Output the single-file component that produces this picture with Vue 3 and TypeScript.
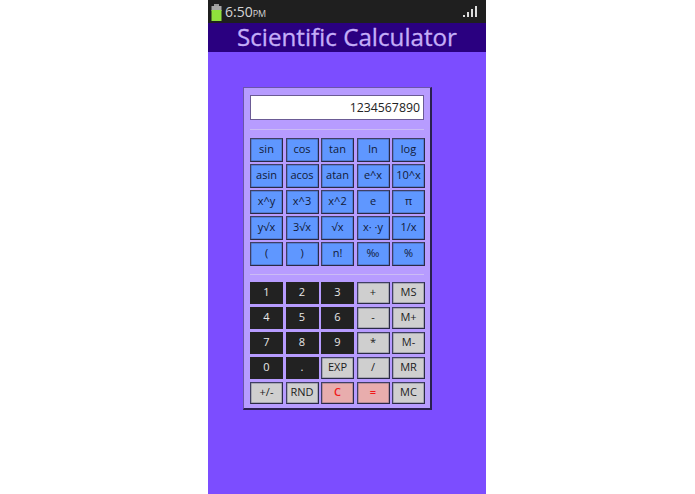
<script setup lang="ts">
interface Key { label: string; kind: string }
const sci: string[] = ['sin','cos','tan','ln','log','asin','acos','atan','e^x','10^x','x^y','x^3','x^2','e','π','y√x','3√x','√x','x· ·y','1/x','(',')','n!','‰','%']
const mk = (s: string, kind: string): Key => ({ label: s, kind })
const pad: Key[] = [
  mk('1','dark'),mk('2','dark'),mk('3','dark'),mk('+','grey'),mk('MS','grey'),
  mk('4','dark'),mk('5','dark'),mk('6','dark'),mk('-','grey'),mk('M+','grey'),
  mk('7','dark'),mk('8','dark'),mk('9','dark'),mk('*','grey'),mk('M-','grey'),
  mk('0','dark'),mk('.','dark'),mk('EXP','grey'),mk('/','grey'),mk('MR','grey'),
  mk('+/-','grey'),mk('RND','grey'),mk('C','red'),mk('=','red'),mk('MC','grey'),
]
</script>

<template>
  <div class="page">
    <div class="phone">
      <div class="status">
        <svg class="battery" width="11" height="17" viewBox="0 0 11 17">
          <rect x="3" y="0" width="5" height="2" fill="#9a9a9a" />
          <rect x="0.5" y="2" width="10" height="5" fill="#a8a8a8" />
          <rect x="0.5" y="6" width="10" height="11" fill="#8fe03c" />
        </svg>
        <span class="time">6:50<small>PM</small></span>
        <svg class="signal" width="14" height="12" viewBox="0 0 14 12">
          <rect x="0" y="9" width="2" height="2" fill="#ddd" />
          <rect x="4" y="6" width="2" height="5" fill="#ddd" />
          <rect x="8" y="3" width="2" height="8" fill="#ddd" />
          <rect x="12" y="0" width="2" height="11" fill="#ddd" />
        </svg>
      </div>
      <div class="title">Scientific Calculator</div>
      <div class="content">
        <div class="panel">
          <div class="display">1234567890</div>
          <div class="divider first"></div>
          <div class="keys sci">
            <div v-for="k in sci" :key="k" class="key blue">{{ k }}</div>
          </div>
          <div class="divider second"></div>
          <div class="keys num">
            <div v-for="k in pad" :key="k.label" class="key" :class="k.kind">{{ k.label }}</div>
          </div>
        </div>
      </div>
    </div>
  </div>
</template>

<style>
html, body { margin: 0; background: #fff; }
</style>

<style scoped>
.page {
  width: 695px;
  height: 494px;
  padding-left: 208px;
  box-sizing: border-box;
  overflow: hidden;
  font-family: "Open Sans", "Noto Sans", sans-serif;
}
.phone { width: 278px; height: 494px; display: flex; flex-direction: column; background: #7c4dff; }
.status {
  height: 23px;
  background: #1f1f1f;
  display: flex;
  align-items: center;
  padding: 0 9px 0 3px;
  color: #d4d4d4;
}
.battery { margin-top: 1px; }
.time { font-size: 14px; margin-left: 3px; flex: 1; }
.time small { font-size: 9px; }
.title {
  height: 29px;
  line-height: 28px;
  background: #2a0080;
  color: #c4aef8;
  font-size: 24.2px;
  font-weight: 500;
  text-align: center;
  -webkit-text-stroke: 0.3px #c4aef8;
}
.content { flex: 1; padding: 35px 0 0 35px; }
.panel {
  width: 189px;
  height: 323px;
  box-sizing: border-box;
  background: #b79cff;
  border: 1px solid #6a55a8;
  border-right: 2px solid #2a2050;
  border-bottom: 2px solid #2a2050;
  padding: 7px 6px 6px 6px;
}
.display {
  height: 25px;
  box-sizing: border-box;
  background: #fff;
  border: 1px solid #6b5b95;
  font-size: 12.3px;
  line-height: 23px;
  text-align: right;
  padding-right: 3px;
  color: #222;
}
.divider { height: 1px; background: #cbbcf5; }
.divider.first { margin: 9px 0 8px; }
.divider.second { margin: 8px 0 7px; }
.keys { display: grid; grid-template-columns: repeat(5, 33px); column-gap: 2.5px; width: 175px; }
.sci { row-gap: 2px; grid-auto-rows: 24px; }
.num { row-gap: 3px; grid-auto-rows: 22px; }
.key {
  box-sizing: border-box;
  display: flex;
  align-items: center;
  justify-content: center;
  font-size: 11px;
  padding-bottom: 3px;
  border: 1px solid #3f3f62;
  border-right-color: #2a2a45;
  border-bottom-color: #2a2a45;
  box-shadow: inset 0 0 0 0.5px rgba(50, 50, 90, 0.5);
}
.blue { background: #5f97ff; color: #111a38; }
.dark { background: #222; color: #e8e8e8; border-color: #222; box-shadow: none; font-weight: 500; }
.grey { background: #cfcfcf; color: #1c1c1c; }
.red { background: #e8adad; color: #f01818; font-weight: 600; }
</style>
